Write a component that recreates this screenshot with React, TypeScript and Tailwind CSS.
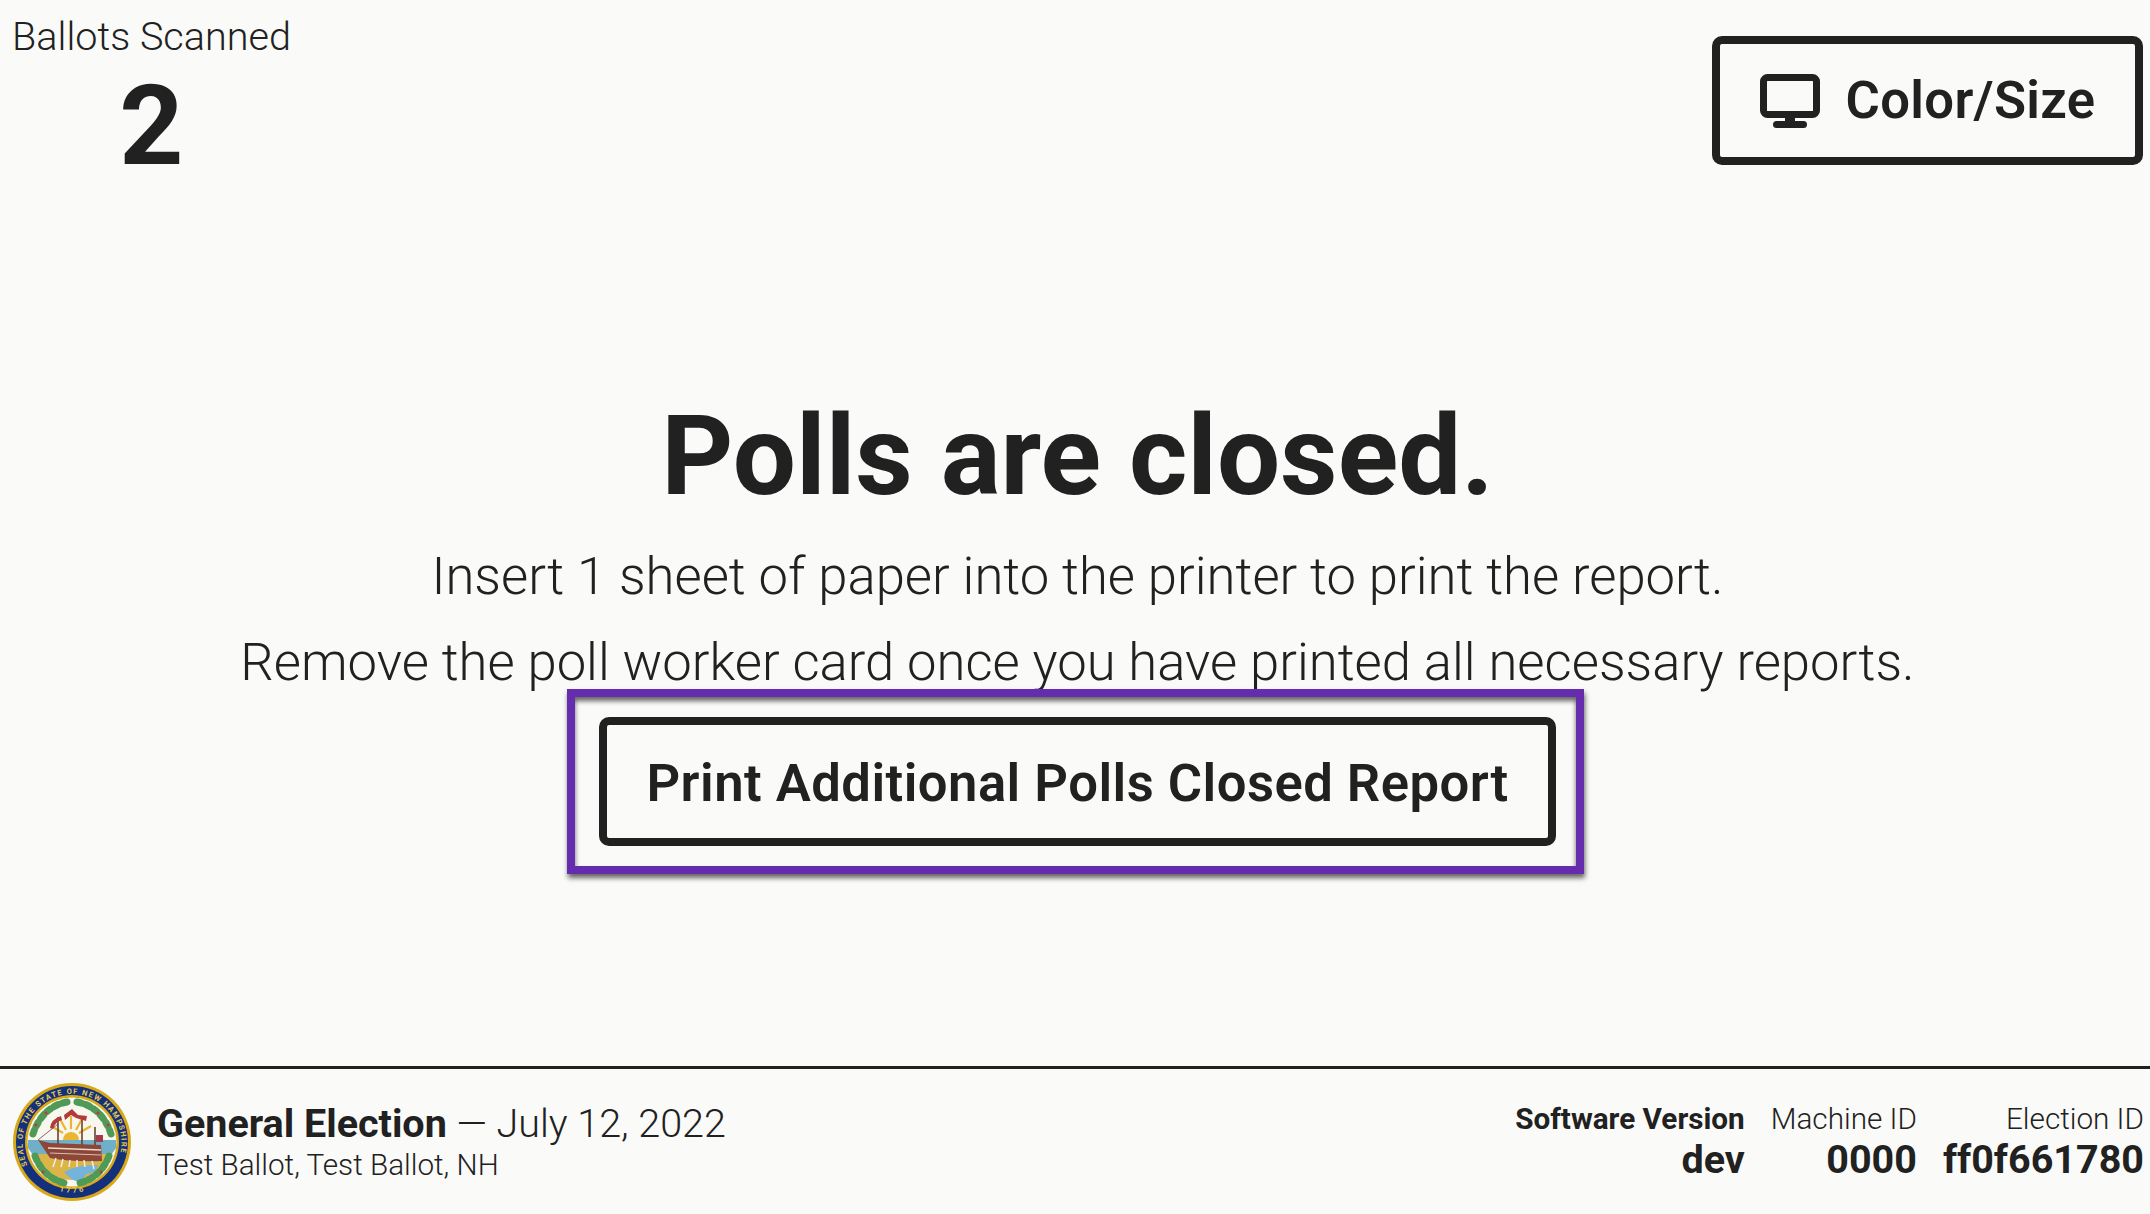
import React from "react";

function StateSeal() {
  return (
    <svg width="120" height="120" viewBox="0 0 120 120" aria-hidden="true">
      <defs>
        <path id="seal-top" d="M 15.5 83 A 49.5 49.5 0 1 1 104.5 83" />
        <path id="seal-bottom" d="M 30 101 A 51.5 51.5 0 0 0 90 101" />
      </defs>
      <circle cx="60" cy="60" r="59" fill="#d9a818" />
      <circle cx="60" cy="60" r="56" fill="#12307c" />
      <circle cx="60" cy="60" r="47" fill="#d9a818" />
      <circle cx="60" cy="60" r="44.5" fill="#f8f7ef" />
      <text fontSize="7.6" fill="#e6c64e" fontWeight="700" letterSpacing="1.25" fontFamily="Roboto, sans-serif">
        <textPath href="#seal-top">SEAL OF THE STATE OF NEW HAMPSHIRE</textPath>
      </text>
      <text fontSize="7.6" fill="#e6c64e" fontWeight="700" letterSpacing="2.4" fontFamily="Roboto, sans-serif">
        <textPath href="#seal-bottom" startOffset="30%">1776</textPath>
      </text>
      {/* water and land */}
      <path d="M16 58 H104 V66 L99 73 H21 L16 66 Z" fill="#6fb0c8" />
      <path d="M21 72 H99 L90 90 Q60 106 30 90 Z" fill="#dcb548" />
      <path d="M52 90 Q66 82 86 83 Q84 92 74 92 L70 100 Q60 100 52 90 Z" fill="#74b4dc" />
      {/* sunrise */}
      <path d="M51 58 A8 8 0 0 1 67 58 Z" fill="#eab530" />
      <g stroke="#eab530" strokeWidth="2.2">
        <path d="M59 47 V34" />
        <path d="M54 48 L48 37" />
        <path d="M64 48 L70 37" />
        <path d="M51 51 L39 44" />
        <path d="M67 51 L79 44" />
      </g>
      {/* ship */}
      <g stroke="#6b4230" strokeWidth="1.6" fill="none">
        <path d="M46 64 V35" />
        <path d="M70 64 V35" />
        <path d="M83 64 V45" />
        <path d="M26 58 L46 42" strokeWidth="0.8" />
      </g>
      <path d="M38 46 Q39 37 49 34 L50 38 Q43 40 41 47 Z" fill="#b33a3a" />
      <path d="M52 33 L60 27 L66 33 L75 34 L74 39 L64 36 L59 33 L53 38 Z" fill="#b33a3a" />
      <path d="M26 58 L38 61 L89 63 L90 79 Q60 80 38 76 Z" fill="#8d4638" />
      <path d="M36 66 L89 68" stroke="#e9dccb" strokeWidth="1.5" />
      <path d="M38 71 L89 73" stroke="#d8c2ae" strokeWidth="1" />
      <g stroke="#f5f0e6" strokeWidth="1.4">
        <path d="M44 76 L41 85" />
        <path d="M51 77 L49 85" />
        <path d="M58 78 L57 85" />
        <path d="M65 78 L65 85" />
        <path d="M72 78 L73 85" />
        <path d="M80 79 L82 87" />
      </g>
      <rect x="84" y="53" width="7" height="7" fill="#a33b4a" />
      {/* laurel */}
      <g stroke="#4f9a57" strokeWidth="7" fill="none" strokeLinecap="round" strokeDasharray="5 4">
        <path d="M55 20 Q30 25 21 52" />
        <path d="M65 20 Q90 25 99 52" />
        <path d="M23 74 Q31 95 52 101" />
        <path d="M97 74 Q89 95 68 101" />
      </g>
      <g fill="#c23b3b">
        <circle cx="34" cy="31" r="1.5" />
        <circle cx="86" cy="31" r="1.5" />
        <circle cx="24" cy="43" r="1.5" />
        <circle cx="96" cy="43" r="1.5" />
        <circle cx="31" cy="90" r="1.5" />
        <circle cx="89" cy="90" r="1.5" />
      </g>
    </svg>
  );
}

function DisplayIcon() {
  return (
    <svg width="60" height="54" viewBox="0 0 60 54" fill="none" aria-hidden="true">
      <rect x="3.5" y="3.5" width="53" height="37" rx="4" stroke="currentColor" strokeWidth="7" />
      <rect x="25" y="42" width="10" height="6" fill="currentColor" />
      <rect x="13" y="47" width="34" height="7" rx="3.5" fill="currentColor" />
    </svg>
  );
}

function MetaItem({ label, value, bold }: { label: string; value: string; bold?: boolean }) {
  return (
    <div className="text-right">
      <div className={`text-[29.7px] leading-[37px] ${bold ? "font-bold" : "font-light"}`}>{label}</div>
      <div className="text-[39.5px] leading-[46px] font-bold">{value}</div>
    </div>
  );
}

export default function App() {
  return (
    <div className="w-[2150px] h-[1214px] flex flex-col overflow-hidden bg-[#fafaf8] text-[#212121] font-['Roboto',sans-serif]">
      {/* top bar */}
      <div className="flex items-start justify-between pl-3 pr-[7px] pt-[12px]">
        <div className="text-center">
          <div className="text-[39.6px] leading-[50px] font-light">Ballots Scanned</div>
          <div className="text-[112px] leading-[128px] font-bold">2</div>
        </div>
        <button className="mt-6 w-[431px] h-[129px] flex items-center justify-center gap-[26px] rounded-[10px] border-[8px] border-[#212121] text-[52.6px] tracking-[0.3px] font-semibold">
          <DisplayIcon />
          Color/Size
        </button>
      </div>

      {/* main message */}
      <main className="flex-1 flex flex-col items-center pl-[5px] pt-[201px] text-center">
        <h1 className="text-[112px] leading-[130px] font-bold">Polls are closed.</h1>
        <p className="mt-[12px] text-[52.6px] leading-[86px] font-light">Insert 1 sheet of paper into the printer to print the report.</p>
        <p className="text-[52.6px] leading-[86px] font-light">Remove the poll worker card once you have printed all necessary reports.</p>
        <div className="-mt-[16px] mr-[4px] pl-[24px] pr-[20px] py-[20px] border-[8px] border-[#652cae] shadow-[1px_4px_5px_rgba(0,0,0,0.6),inset_0_4px_5px_rgba(0,0,0,0.6)]">
          <button className="w-[957px] h-[129px] pt-[4px] rounded-[10px] border-[8px] border-[#212121] text-[52.6px] tracking-[0.47px] font-semibold">
            Print Additional Polls Closed Report
          </button>
        </div>
      </main>

      {/* footer */}
      <footer className="h-[148px] border-t-[3px] border-[#212121] flex items-center justify-between pl-[12px] pr-[6px]">
        <div className="flex items-center gap-[25px]">
          <StateSeal />
          <div>
            <div className="text-[39.5px] leading-[46px]">
              <span className="font-bold">General Election</span>
              <span className="font-light"> — July 12, 2022</span>
            </div>
            <div className="text-[29.7px] leading-[36px] font-light">Test Ballot, Test Ballot, NH</div>
          </div>
        </div>
        <div className="flex gap-[26px]">
          <MetaItem label="Software Version" value="dev" bold />
          <MetaItem label="Machine ID" value="0000" />
          <MetaItem label="Election ID" value="ff0f661780" />
        </div>
      </footer>
    </div>
  );
}
